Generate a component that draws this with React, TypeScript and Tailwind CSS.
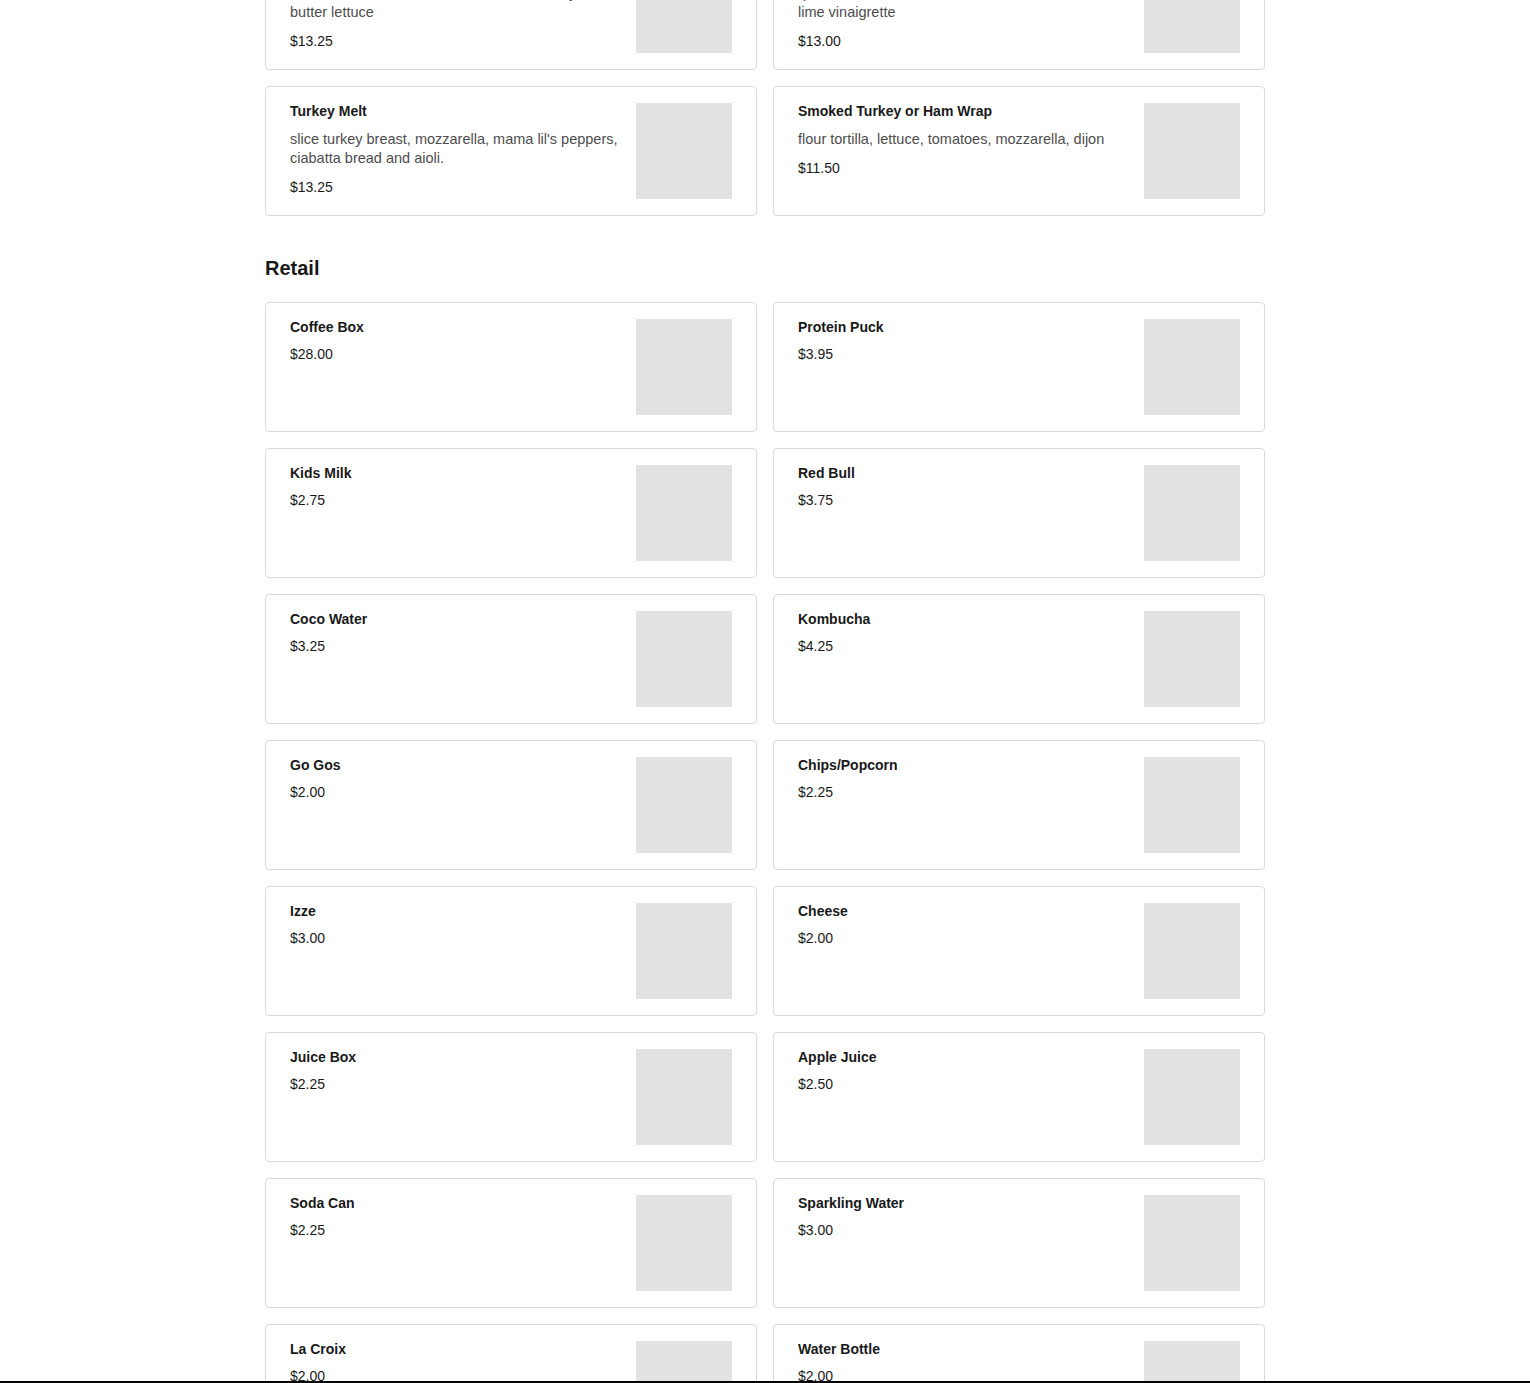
type Item = { name: string; desc?: string; price: string }

const sandwiches: Item[] = [
  {
    name: "Chicken Salad Croissant",
    desc: "chicken salad, bacon, tomato, avocado, mayo,\nbutter lettuce",
    price: "$13.25",
  },
  {
    name: "Southwest Quinoa Salad",
    desc: "quinoa, black beans, corn, avocado, cilantro\nlime vinaigrette",
    price: "$13.00",
  },
  {
    name: "Turkey Melt",
    desc: "slice turkey breast, mozzarella, mama lil's peppers, ciabatta bread and aioli.",
    price: "$13.25",
  },
  {
    name: "Smoked Turkey or Ham Wrap",
    desc: "flour tortilla, lettuce, tomatoes, mozzarella, dijon",
    price: "$11.50",
  },
]

const retail: Item[] = [
  { name: "Coffee Box", price: "$28.00" },
  { name: "Protein Puck", price: "$3.95" },
  { name: "Kids Milk", price: "$2.75" },
  { name: "Red Bull", price: "$3.75" },
  { name: "Coco Water", price: "$3.25" },
  { name: "Kombucha", price: "$4.25" },
  { name: "Go Gos", price: "$2.00" },
  { name: "Chips/Popcorn", price: "$2.25" },
  { name: "Izze", price: "$3.00" },
  { name: "Cheese", price: "$2.00" },
  { name: "Juice Box", price: "$2.25" },
  { name: "Apple Juice", price: "$2.50" },
  { name: "Soda Can", price: "$2.25" },
  { name: "Sparkling Water", price: "$3.00" },
  { name: "La Croix", price: "$2.00" },
  { name: "Water Bottle", price: "$2.00" },
]

function MenuCard({ item }: { item: Item }) {
  return (
    <div className="flex h-[130px] items-start gap-4 rounded-[4px] border border-[#d9d9d9] bg-white px-6 py-4">
      <div className="min-w-0 flex-1">
        <div className="text-[14px] leading-4 font-bold text-[#191919]">{item.name}</div>
        {item.desc && (
          <p className="mt-[11px] text-[14.5px] leading-[19px] whitespace-pre-line text-[#4d4d4d]">
            {item.desc}
          </p>
        )}
        <div className="mt-[9px] text-[14px] leading-5 text-[#191919]">{item.price}</div>
      </div>
      <div className="h-24 w-24 shrink-0 bg-[#e2e2e2]" />
    </div>
  )
}

export default function App() {
  return (
    <div className="min-h-screen overflow-hidden bg-white font-['Liberation_Sans',Arial,sans-serif]">
      <div className="mx-auto -mt-[60px] w-[1000px]">
        <div className="grid grid-cols-2 gap-4">
          {sandwiches.map((it) => (
            <MenuCard key={it.name} item={it} />
          ))}
        </div>

        <h2 className="mt-[38px] mb-5 text-[20px] leading-7 font-bold text-[#191919]">Retail</h2>
        <div className="grid grid-cols-2 gap-4 pb-10">
          {retail.map((it) => (
            <MenuCard key={it.name} item={it} />
          ))}
        </div>
      </div>
      {/* edge of the sticky footer peeking in */}
      <div className="fixed inset-x-0 bottom-0 h-[2px] bg-black" />
    </div>
  )
}
